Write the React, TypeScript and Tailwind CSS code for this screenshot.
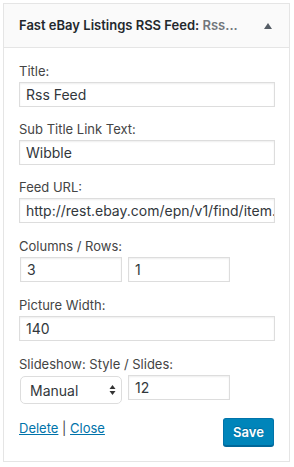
import React from "react";

const font = { fontFamily: "Inter, 'Liberation Sans', sans-serif" };

function Label({ children }: { children: React.ReactNode }) {
  return <div className="text-[13px] leading-[18px] text-[#444]">{children}</div>;
}

function Input({ value, className = "w-full" }: { value: string; className?: string }) {
  return (
    <input
      readOnly
      value={value}
      className={`block mt-[2px] h-[25px] border border-[#ddd] bg-white shadow-[inset_0_1px_2px_rgba(0,0,0,0.07)] pl-[6px] pr-0 text-[14px] text-[#32373c] outline-none ${className}`}
      style={font}
    />
  );
}

export default function App() {
  return (
    <div className="w-[294px] h-[467px] bg-white pt-[3px] pl-[3px]" style={font}>
      <div className="w-[287px] h-[459px] border border-[#e5e5e5] bg-white flex flex-col">
        <div className="h-[44px] shrink-0 border-b border-[#e5e5e5] bg-[#fafafa] flex items-center pl-[15px] pr-[15px]">
          <div className="flex-1 text-[13px] font-semibold text-[#23282d] whitespace-nowrap">
            Fast eBay Listings RSS Feed: <span className="text-[#72777c]">Rss...</span>
          </div>
          <svg width="10" height="8" viewBox="0 0 10 8" className="mr-[1px]">
            <path d="M5 1 L9 7 L1 7 Z" fill="#555d66" />
          </svg>
        </div>
        <div className="pl-[15px] pr-[14px] pt-[14px]">
          <Label>Title:</Label>
          <Input value="Rss Feed" />
          <div className="mt-[13px]">
            <Label>Sub Title Link Text:</Label>
            <Input value="Wibble" />
          </div>
          <div className="mt-[13px]">
            <Label>Feed URL:</Label>
            <Input value="http://rest.ebay.com/epn/v1/find/item.rss?keyword=" />
          </div>
          <div className="mt-[14px]">
            <Label>Columns / Rows:</Label>
            <div className="flex gap-[6px] pl-[1px]">
              <Input value="3" className="w-[102px]" />
              <Input value="1" className="w-[102px]" />
            </div>
          </div>
          <div className="mt-[14px]">
            <Label>Picture Width:</Label>
            <Input value="140" />
          </div>
          <div className="mt-[14px]">
            <Label>Slideshow: Style / Slides:</Label>
            <div className="flex gap-[6px] pl-[1px] items-start">
              <div className="mt-[3px] w-[102px] h-[28px] border border-[#ddd] rounded-[5px] bg-white flex items-center pl-[9px] pr-[5px] text-[14px] text-[#32373c]">
                <span className="flex-1">Manual</span>
                <svg width="7" height="12" viewBox="0 0 7 12">
                  <path d="M3.5 1 L6.5 5 L0.5 5 Z" fill="#333" />
                  <path d="M3.5 11 L6.5 7 L0.5 7 Z" fill="#333" />
                </svg>
              </div>
              <Input value="12" className="w-[102px]" />
            </div>
          </div>
          <div className="mt-[14px] flex items-start">
            <div className="flex-1 text-[13px] leading-[18px] text-[#444] pt-[1px]">
              <a href="#" className="text-[#0073aa] underline">Delete</a>
              <span> | </span>
              <a href="#" className="text-[#0073aa] underline">Close</a>
            </div>
            <button className="w-[51px] h-[28px] rounded-[3px] bg-[#0085ba] border border-[#0073aa] border-b-[#006799] shadow-[0_1px_0_#006799] text-white text-[13px] font-semibold leading-[26px] [text-shadow:0_-1px_1px_#006799] mr-[1px]">
              Save
            </button>
          </div>
        </div>
      </div>
    </div>
  );
}
